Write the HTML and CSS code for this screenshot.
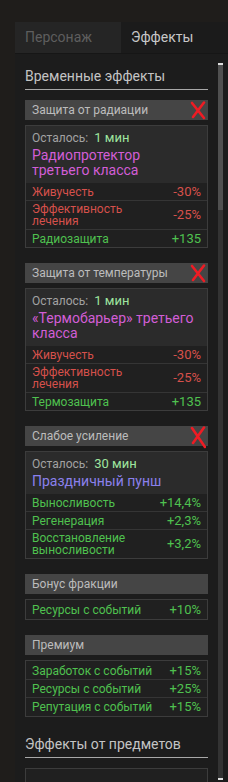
FILE: index.html
```html
<!DOCTYPE html>
<html lang="ru">
<head>
<meta charset="utf-8">
<link rel="stylesheet" href="styles.css">
</head>
<body>
<div class="app">
  <div class="tabs">
    <div class="tab">Персонаж</div>
    <div class="tab active">Эффекты</div>
  </div>
  <div class="panel">
    <div class="content">
      <div class="title">Временные эффекты</div>

      <div class="group">
        <div class="ghead"><span>Защита от радиации</span><svg class="x" viewBox="0 0 16 20"><path d="M2 3 L14 18 M14 2.5 L3 17" /></svg></div>
        <div class="card">
          <div class="ctop">
            <div class="left">Осталось: <span class="time">1 мин</span></div>
            <div class="name pink">Радиопротектор третьего класса</div>
          </div>
          <div class="row red"><span class="lbl">Живучесть</span><span class="val">-30%</span></div>
          <div class="row red"><span class="lbl">Эффективность лечения</span><span class="val">-25%</span></div>
          <div class="row green"><span class="lbl">Радиозащита</span><span class="val">+135</span></div>
        </div>
      </div>

      <div class="group">
        <div class="ghead"><span>Защита от температуры</span><svg class="x" viewBox="0 0 16 20"><path d="M2 3 L14 18 M14 2.5 L3 17" /></svg></div>
        <div class="card">
          <div class="ctop">
            <div class="left">Осталось: <span class="time">1 мин</span></div>
            <div class="name pink">«Термобарьер» третьего класса</div>
          </div>
          <div class="row red"><span class="lbl">Живучесть</span><span class="val">-30%</span></div>
          <div class="row red"><span class="lbl">Эффективность лечения</span><span class="val">-25%</span></div>
          <div class="row green"><span class="lbl">Термозащита</span><span class="val">+135</span></div>
        </div>
      </div>

      <div class="group">
        <div class="ghead"><span>Слабое усиление</span><svg class="x big" viewBox="0 0 16 24"><path d="M2 3 L15 22 M14 2.5 L3 18" /></svg></div>
        <div class="card">
          <div class="ctop">
            <div class="left">Осталось: <span class="time">30 мин</span></div>
            <div class="name violet">Праздничный пунш</div>
          </div>
          <div class="row green"><span class="lbl">Выносливость</span><span class="val">+14,4%</span></div>
          <div class="row green"><span class="lbl">Регенерация</span><span class="val">+2,3%</span></div>
          <div class="row green"><span class="lbl">Восстановление выносливости</span><span class="val">+3,2%</span></div>
        </div>
      </div>

      <div class="group">
        <div class="ghead"><span>Бонус фракции</span></div>
        <div class="card plain">
          <div class="row green"><span class="lbl">Ресурсы с событий</span><span class="val">+10%</span></div>
        </div>
      </div>

      <div class="group">
        <div class="ghead"><span>Премиум</span></div>
        <div class="card plain">
          <div class="row green"><span class="lbl">Заработок с событий</span><span class="val">+15%</span></div>
          <div class="row green"><span class="lbl">Ресурсы с событий</span><span class="val">+25%</span></div>
          <div class="row green"><span class="lbl">Репутация с событий</span><span class="val">+15%</span></div>
        </div>
      </div>

      <div class="title second">Эффекты от предметов</div>
      <div class="card stub"></div>
    </div>
    <div class="scroll"><div class="thumb"></div></div>
  </div>
</div>
</body>
</html>
```

FILE: styles.css
```css
html, body {
  margin: 0;
  padding: 0;
  background: #1f1d1b;
  height: 782px;
  overflow: hidden;
  font-family: Roboto, "Liberation Sans", sans-serif;
}
.app {
  padding: 22px 0 0 15px;
}
.tabs {
  display: flex;
  height: 31px;
  border-bottom: 1px solid #161616;
}
.tab {
  width: 106px;
  background: #252525;
  color: #5e5e5e;
  font-size: 14px;
  line-height: 31px;
  padding-left: 10px;
  box-sizing: border-box;
}
.tab.active {
  flex: 1;
  background: #1b1b1b;
  color: #c8c8c8;
}
.panel {
  display: flex;
  background: #1c1c1c;
  height: 740px;
}
.content {
  width: 183px;
  margin-left: 10px;
  padding-top: 13px;
}
.title {
  color: #c4c4c4;
  font-size: 14px;
  line-height: 18px;
  padding-bottom: 4px;
  border-bottom: 1px solid #a8a8a8;
  margin-bottom: 10px;
}
.title.second {
  margin-top: 18px;
}
.group {
  margin-bottom: 15px;
}
.ghead {
  position: relative;
  height: 20px;
  background: #454545;
  color: #bcbcbc;
  font-size: 12px;
  line-height: 20px;
  padding-left: 7px;
  margin-bottom: 5px;
}
.x {
  position: absolute;
  right: 2px;
  top: 0;
  width: 16px;
  height: 20px;
}
.x.big {
  top: -1px;
  height: 24px;
}
.x path {
  stroke: #ee1c24;
  stroke-width: 2.6;
  fill: none;
  stroke-linecap: round;
}
.card {
  border: 1px solid #3c3c3c;
  background: #202020;
}
.card.plain {
  padding: 1px 0;
}
.ctop {
  background: #2b2b2b;
  padding: 4px 6px 5px;
}
.left {
  color: #a2a2a2;
  font-size: 12px;
  line-height: 16px;
}
.time {
  color: #9fe59f;
  font-size: 13px;
  margin-left: 3px;
}
.name {
  font-size: 14px;
  line-height: 15px;
  margin-top: 2px;
}
.pink { color: #d25ed6; }
.violet { color: #8a80ec; }
.row {
  display: flex;
  justify-content: space-between;
  align-items: center;
  gap: 12px;
  padding: 2px 6px 2px;
  font-size: 12px;
  line-height: 12px;
  min-height: 13px;
  border-top: 1px solid #353535;
}
.ctop + .row { border-top: none; }
.card > .row:first-child { border-top: none; }
.lbl { flex: 0 1 auto; }
.val { flex: 0 0 auto; font-size: 13px; }
.red { color: #d6504b; }
.green { color: #4fc14f; }
.stub {
  height: 20px;
}
.scroll {
  width: 5px;
  margin-left: 10px;
  margin-top: 9px;
  height: 713px;
  background: #333;
  border-top: 2px solid #ddd;
  border-bottom: 2px solid #ddd;
  display: flex;
  flex-direction: column;
}
.thumb {
  height: 145px;
  background: #505050;
}
```
